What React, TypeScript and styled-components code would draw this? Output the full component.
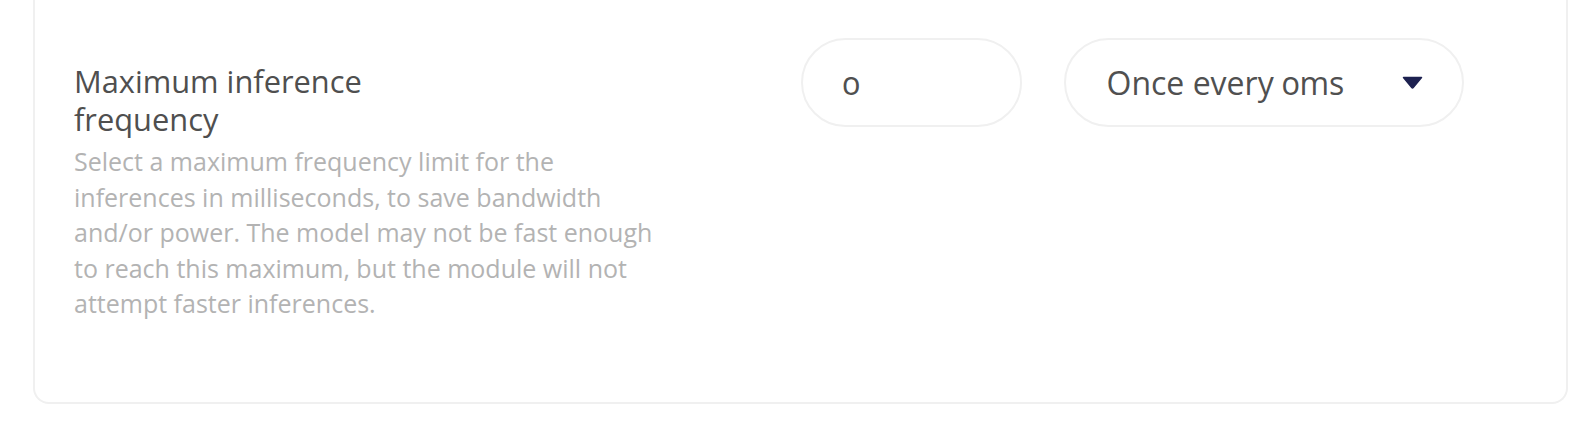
import React from 'react';
import styled, { createGlobalStyle } from 'styled-components';

const GlobalStyle = createGlobalStyle`
  html, body {
    margin: 0;
    padding: 0;
    background: #ffffff;
  }
  body {
    font-family: 'Open Sans', 'Liberation Sans', sans-serif;
    -webkit-font-smoothing: antialiased;
  }
`;

const Page = styled.div`
  padding: 0 28px 0 33px;
`;

// the card continues above the visible area, so only its sides and bottom show
const Card = styled.section`
  display: grid;
  grid-template-columns: 1fr 1fr;
  padding: 38px 39px 80px 39px;
  border: 2px solid #f0f0f0;
  border-top: none;
  border-radius: 0 0 16px 16px;
  background: #ffffff;
`;

const Label = styled.div`
  padding-top: 25px;
  display: flex;
  flex-direction: column;
  gap: 6px;
`;

const Title = styled.h3`
  margin: 0;
  max-width: 340px;
  font-size: 30.8px;
  line-height: 37.5px;
  font-weight: 400;
  color: #4f4f4f;
`;

const Description = styled.p`
  margin: 0;
  max-width: 592px;
  font-size: 25px;
  line-height: 35.6px;
  font-weight: 400;
  color: #b3b3b3;
`;

const Controls = styled.div`
  display: flex;
  align-items: flex-start;
  gap: 42px;
`;

const Pill = styled.div`
  box-sizing: border-box;
  height: 89px;
  border: 2px solid #f0f0f0;
  border-radius: 45px;
  background: #ffffff;
`;

const NumberField = styled(Pill).attrs({ as: 'input' })<{ $width: number }>`
  width: ${(p) => p.$width}px;
  padding: 0 20px 0 40px;
  font-family: 'Open Sans', 'Liberation Sans', sans-serif;
  font-size: 32px;
  font-variant-numeric: oldstyle-nums;
  color: #505050;
  outline: none;
`;

const Select = styled(Pill)<{ $width: number }>`
  width: ${(p) => p.$width}px;
  display: flex;
  align-items: center;
  justify-content: space-between;
  padding: 0 39px 0 41px;
  font-size: 32px;
  font-variant-numeric: oldstyle-nums;
  color: #505050;
  cursor: pointer;
`;

const Caret = () => (
  <svg width="21" height="13" viewBox="0 0 21 13">
    <path d="M1.5 1.5 H19.5 L11.2 11.6 Q10.5 12.4 9.8 11.6 Z" fill="#1d2150" stroke="#1d2150" strokeWidth="1.5" strokeLinejoin="round" />
  </svg>
);

export default function App() {
  const interval = 0;
  return (
    <Page>
      <GlobalStyle />
      <Card>
        <Label>
          <Title>Maximum inference frequency</Title>
          <Description>
            Select a maximum frequency limit for the inferences in milliseconds, to save bandwidth and/or power. The model may not be fast enough to reach this maximum, but the module will not attempt faster inferences.
          </Description>
        </Label>
        <Controls>
          <NumberField $width={221} type="text" defaultValue={String(interval)} />
          <Select $width={400}>
            <span>Once every {interval}ms</span>
            <Caret />
          </Select>
        </Controls>
      </Card>
    </Page>
  );
}
